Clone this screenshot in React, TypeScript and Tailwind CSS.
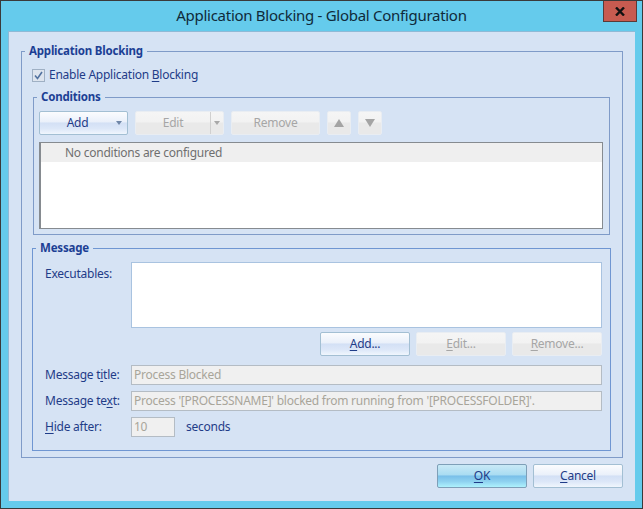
import type { ReactNode } from "react";

const TEXT = "text-[#1f3c88]";
const LEGEND = "ml-[3px] px-[4px] h-[16px] leading-[16px] text-[11.5px] tracking-[-0.2px] font-bold text-[#1c3f94]";

function Btn({ label, kind, w, children }: { label?: ReactNode; kind: "normal" | "disabled" | "ok"; w: string; children?: ReactNode }) {
  const styles = {
    normal: "border-[#a3bfd3] bg-[linear-gradient(#fbfcfe_0%,#eaf0fa_45%,#d3e0f5_50%,#dce7f8_75%,#f0f6fd_100%)] text-[#1f3c88]",
    disabled: "border-[#e9edf2] bg-[linear-gradient(#f5f5f5_0%,#f2f2f2_45%,#e9e9e9_50%,#e9e9e9_100%)] text-[#a6a6a6]",
    ok: "border-[#7e9fb8] bg-[linear-gradient(#c9e9f6_0%,#a9dcf2_45%,#79bfe9_50%,#8fd2f0_75%,#aef2fd_100%)] text-[#1f3c88]",
  }[kind];
  return (
    <div className={`${w} h-[24px] shrink-0 rounded-[2px] border flex items-center justify-center text-[12px] ${styles}`}>
      {label}
      {children}
    </div>
  );
}

function Arrow({ up }: { up?: boolean }) {
  return (
    <svg width="12" height="10" viewBox="0 0 12 10">
      <path d={up ? "M6 1L11 9H1z" : "M1 1H11L6 9z"} fill="#a4a4a4" />
    </svg>
  );
}

function Caret({ color }: { color: string }) {
  return (
    <svg width="6" height="4" viewBox="0 0 6 4">
      <path d="M0 0H6L3 4z" fill={color} />
    </svg>
  );
}

function U({ children }: { children: ReactNode }) {
  return <span className="underline underline-offset-2">{children}</span>;
}

function Field({ label, value }: { label: ReactNode; value: string }) {
  return (
    <div className="flex items-center h-[20px] mt-[6px]">
      <div className={`w-[86px] text-[12px] ${TEXT}`}>{label}</div>
      <div className="w-[471px] h-[20px] border border-[#b4bcc4] bg-[#f0f0f0] pl-[2px] text-[12px] leading-[18px] text-[#a8a59a]">{value}</div>
    </div>
  );
}

export default function App() {
  return (
    <div className="w-[643px] h-[509px] flex flex-col border border-[#3a3a3a] bg-[#65cbec] font-['Noto_Sans',sans-serif] tracking-[-0.25px] overflow-hidden relative">
      {/* title bar */}
      <div className="h-[30px] shrink-0 pb-[1px] flex items-center justify-center text-[15px] tracking-[-0.28px] text-[#0f2a3a]">
        Application Blocking - Global Configuration
      </div>
      <div className="absolute top-0 right-[5px] w-[34px] h-[21px] bg-[#c75b50] border border-[#5a3a38] border-t-0 flex items-center justify-center">
        <svg width="10" height="9" viewBox="0 0 10 9">
          <path d="M1 0.5L9 8.5M9 0.5L1 8.5" stroke="#111" strokeWidth="2.4" />
        </svg>
      </div>

      {/* client area */}
      <div className="mx-[7px] h-[470px] shrink-0 border-t border-l border-[#8fbad6] bg-[#d6e3f4] px-[12px] pt-[11px]">
        <fieldset className="border border-[#7f9bc8] h-[415px] w-[602px]">
          <legend className={LEGEND}>Application Blocking</legend>
          <div className="px-[11px]">
            <div className="flex items-center h-[14px] mt-[9px] ml-[-1px]">
              <div className="w-[13px] h-[13px] border border-[#9fb0c4] bg-[#dde4ee] flex items-center justify-center">
                <svg width="9" height="9" viewBox="0 0 9 9">
                  <path d="M1 4.5L3.5 7.5L8 1" stroke="#5272a0" strokeWidth="1.6" fill="none" />
                </svg>
              </div>
              <span className={`ml-[4px] text-[12px] ${TEXT}`}>Enable Application <U>B</U>locking</span>
            </div>

            <fieldset className="border border-[#7f9bc8] mt-[7px] h-[146px] w-[577px]">
              <legend className={LEGEND}>Conditions</legend>
              <div className="pl-[5px]">
                <div className="flex mt-[6px]">
                  <Btn kind="normal" w="w-[89px]">
                    <span className="flex-1 text-center pr-[1px]">Add</span>
                    <span className="pr-[5px] flex"><Caret color="#6f86a8" /></span>
                  </Btn>
                  <Btn kind="disabled" w="w-[89px] ml-[7px]">
                    <span className="flex-1 text-center">Edit</span>
                    <span className="w-[13px] h-full border-l border-[#d0d0d0] flex items-center justify-center"><Caret color="#a8a8a8" /></span>
                  </Btn>
                  <Btn kind="disabled" w="w-[89px] ml-[7px]" label="Remove" />
                  <Btn kind="disabled" w="w-[24px] ml-[7px]"><Arrow up /></Btn>
                  <Btn kind="disabled" w="w-[24px] ml-[7px]"><Arrow /></Btn>
                </div>
                <div className="mt-[7px] w-[564px] h-[87px] border border-[#868b90] border-l-2 bg-white">
                  <div className="h-[19px] bg-[#efefef] pl-[24px] text-[12px] leading-[19px] text-[#6f6f6f]">No conditions are configured</div>
                </div>
              </div>
            </fieldset>

            <fieldset className="border border-[#6f96d2] mt-[5px] h-[211px] w-[579px] ml-[-1px]">
              <legend className={LEGEND}>Message</legend>
              <div className="pl-[12px]">
                <div className="flex mt-[6px]">
                  <div className={`w-[86px] text-[12px] pt-[3px] ${TEXT}`}>Executables:</div>
                  <div className="w-[471px] h-[66px] border border-[#a9c3e0] bg-white" />
                </div>
                <div className="flex justify-end w-[557px] mt-[4px] gap-[6px]">
                  <Btn kind="normal" w="w-[90px]" label={<><U>A</U>dd...</>} />
                  <Btn kind="disabled" w="w-[90px]" label={<><U>E</U>dit...</>} />
                  <Btn kind="disabled" w="w-[90px]" label={<><U>R</U>emove...</>} />
                </div>
                <div className="mt-[9px]">
                  <Field label={<>Message t<U>i</U>tle:</>} value="Process Blocked" />
                  <Field label={<>Message te<U>x</U>t:</>} value="Process '[PROCESSNAME]' blocked from running from '[PROCESSFOLDER]'." />
                  <div className="flex items-center h-[20px] mt-[6px]">
                    <div className={`w-[86px] text-[12px] ${TEXT}`}><U>H</U>ide after:</div>
                    <div className="w-[44px] h-[20px] border border-[#b4bcc4] bg-[#f0f0f0] pl-[2px] text-[12px] leading-[18px] text-[#a8a59a]">10</div>
                    <span className={`ml-[11px] text-[12px] ${TEXT}`}>seconds</span>
                  </div>
                </div>
              </div>
            </fieldset>
          </div>
        </fieldset>

        <div className="flex justify-end gap-[6px] w-[602px] mt-[6px]">
          <Btn kind="ok" w="w-[90px]" label={<><U>O</U>K</>} />
          <Btn kind="normal" w="w-[90px]" label={<><U>C</U>ancel</>} />
        </div>
      </div>
    </div>
  );
}
